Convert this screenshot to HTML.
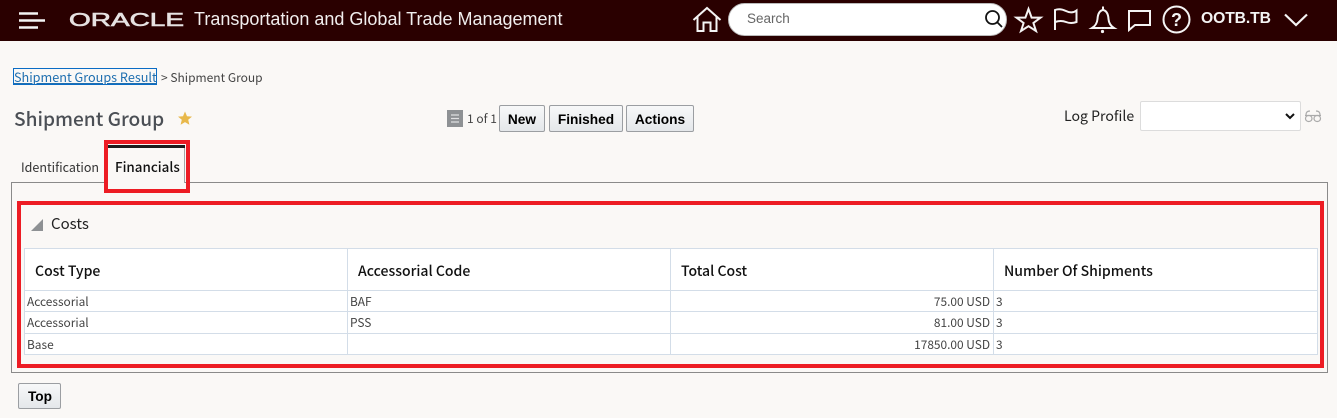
<!DOCTYPE html>
<html><head><meta charset="utf-8"><style>
html,body{margin:0;padding:0;width:1337px;height:418px;overflow:hidden;background:#faf8f6}
.a{position:absolute;white-space:nowrap}
.s{font-family:"Noto Sans CJK SC","Liberation Sans",sans-serif}
.l{font-family:"Liberation Sans",sans-serif}
.btn{position:absolute;box-sizing:border-box;border:1px solid #9b9ea2;border-radius:2px;background:linear-gradient(#f7f8f9,#e4e7ea);font:bold 13.7px/27px "Liberation Sans",sans-serif;color:#000;text-align:center}
.hl{position:absolute;background:#d3dde8}
.th{font-size:14.05px;font-weight:500;color:#111;line-height:20px}
.td{font-size:11.9px;color:#444;line-height:16px}
.red{position:absolute;box-sizing:border-box;border:4px solid #ed1c24}
</style></head><body>
<div class="a" style="left:0;top:0;width:1337px;height:41px;background:#2a0000"></div>
<svg class="a" style="left:0;top:0" width="1337" height="41" fill="none" stroke="#f4f4f4" stroke-width="2">
<path d="M19 13.5H38M19 20.5H45M19 27.5H38" stroke-width="2.4"/>
<text x="69" y="26" font-family="Liberation Sans" font-size="18" fill="#e6e2e2" stroke="#e6e2e2" stroke-width=".6" textLength="115" lengthAdjust="spacingAndGlyphs">ORACLE</text>
<path d="M693.5 20L707 8L720.5 20M697.5 17V31H703.5V22.5H710.5V31H716.5V17" stroke-width="2"/>
<path d="M1028.5 9L1031.6 17.6H1040.6L1033.4 23L1036 31L1028.5 26.2L1021 31L1023.6 23L1016.4 17.6H1025.4Z"/>
<path d="M1055 30V10Q1060 8 1066 11T1076.5 10.5V22Q1071 24 1066 22T1055 22"/>
<path d="M1092 28H1114Q1109 25 1108.5 19Q1108 11 1103 10Q1098 11 1097.5 19Q1097 25 1092 28ZM1103 10V6.5"/>
<circle cx="1102.5" cy="31.5" r="1.6" fill="#f4f4f4" stroke="none"/>
<path d="M1129 11H1150V25H1135L1129 30Z"/>
<circle cx="1176.5" cy="19.5" r="13"/>
<text x="1176.5" y="26" font-family="Liberation Sans" font-size="18" font-weight="bold" fill="#f4f4f4" stroke="none" text-anchor="middle">?</text>
<path d="M1285 14.5L1296 25L1307 14.5" stroke-width="2.2"/>
</svg>
<div class="a l" style="left:194px;top:8px;font-size:18px;line-height:22px;color:#f1eeee">Transportation and Global Trade Management</div>
<div class="a" style="left:728px;top:3px;width:279px;height:33px;box-sizing:border-box;background:#fff;border-radius:17px;border:1px solid #bbb"></div>
<div class="a l" style="left:747px;top:11px;font-size:13.5px;line-height:16px;color:#666">Search</div>
<svg class="a" style="left:984px;top:9px" width="20" height="20" fill="none" stroke="#111" stroke-width="1.8"><circle cx="8.5" cy="8.5" r="6.5"/><path d="M13 13L18 18"/></svg>
<div class="a l" style="left:1201px;top:10px;font-size:15.7px;font-weight:bold;line-height:18px;color:#f4f4f4;letter-spacing:-.1px">OOTB.TB</div>

<div class="a" style="left:13px;top:68px;width:144px;height:17px;box-sizing:border-box;border:1px solid #0a6cc4"></div>
<div class="a s" style="left:14px;top:68px;font-size:12.65px;line-height:18px;color:#1f6fb0;text-decoration:underline">Shipment Groups Result</div>
<div class="a s" style="left:161px;top:69px;font-size:12px;line-height:17px;color:#444">&gt; Shipment Group</div>
<div class="a s" style="left:14px;top:105px;font-size:19.1px;font-weight:500;line-height:26px;color:#4b4f55">Shipment Group</div>
<svg class="a" style="left:177px;top:110px" width="16" height="16"><path d="M8 1.5L10 6.2L15 6.6L11.2 9.8L12.4 14.7L8 12.1L3.6 14.7L4.8 9.8L1 6.6L6 6.2Z" fill="#e8b84a"/></svg>
<div class="a" style="left:447px;top:110px;width:16px;height:17px;background:#8e9194"></div>
<svg class="a" style="left:447px;top:110px" width="16" height="17" stroke="#dfe0e1" stroke-width="1.3"><path d="M4 5H12M4 8.5H12M4 12H12"/></svg>
<div class="a s" style="left:467px;top:110px;font-size:12px;line-height:17px;color:#444">1 of 1</div>
<div class="btn" style="left:499px;top:105px;width:46px;height:27px">New</div>
<div class="btn" style="left:549px;top:105px;width:74px;height:27px">Finished</div>
<div class="btn" style="left:626px;top:105px;width:68px;height:27px">Actions</div>
<div class="a s" style="left:1064px;top:106px;font-size:14.1px;line-height:20px;color:#222">Log Profile</div>
<div class="a" style="left:1140px;top:101px;width:161px;height:30px;box-sizing:border-box;background:#fff;border:1px solid #dcdcdc;border-radius:2px"></div>
<svg class="a" style="left:1284px;top:112px" width="12" height="9" fill="none" stroke="#111" stroke-width="2"><path d="M2 2L6 6L10 2"/></svg>
<svg class="a" style="left:1304px;top:109px" width="18" height="14" fill="none" stroke="#aaa" stroke-width="1.2"><path d="M1 6.5H17"/><rect x="1.5" y="6.5" width="6.5" height="6" rx="3"/><rect x="10" y="6.5" width="6.5" height="6" rx="3"/><path d="M2 6Q2 2 6 2M16 6Q16 2 12 2"/></svg>

<div class="a" style="left:11px;top:182px;width:1317px;height:191px;box-sizing:border-box;border:1px solid #8a8a8a"></div>
<div class="a" style="left:108px;top:148px;width:77px;height:35px;background:#faf8f6;border-right:1px solid #a5a5a5;box-sizing:border-box"></div>
<div class="a" style="left:108px;top:145px;width:77px;height:3px;background:#1c1c1c"></div>
<div class="a s" style="left:21px;top:157px;font-size:12.5px;line-height:20px;color:#333">Identification</div>
<div class="a s" style="left:115px;top:156px;font-size:13.4px;font-weight:500;line-height:20px;color:#111">Financials</div>
<div class="red" style="left:104px;top:140px;width:86px;height:53px"></div>
<div class="red" style="left:17px;top:201px;width:1307px;height:167px"></div>
<svg class="a" style="left:30px;top:218px" width="14" height="14"><path d="M1 13L13 1V13Z" fill="#8e9194"/></svg>
<div class="a s" style="left:51px;top:214px;font-size:15px;line-height:20px;color:#222">Costs</div>

<div class="a" style="left:24px;top:248px;width:1293px;height:107px;background:#fff"></div>
<div class="hl" style="left:24px;top:248px;width:1294px;height:1px"></div>
<div class="hl" style="left:24px;top:290px;width:1294px;height:1px"></div>
<div class="hl" style="left:24px;top:311px;width:1294px;height:1px"></div>
<div class="hl" style="left:24px;top:333px;width:1294px;height:1px"></div>
<div class="hl" style="left:24px;top:354px;width:1294px;height:1px"></div>
<div class="hl" style="left:24px;top:248px;width:1px;height:107px"></div>
<div class="hl" style="left:347px;top:248px;width:1px;height:107px"></div>
<div class="hl" style="left:670px;top:248px;width:1px;height:107px"></div>
<div class="hl" style="left:993px;top:248px;width:1px;height:107px"></div>
<div class="hl" style="left:1317px;top:248px;width:1px;height:107px"></div>
<div class="a s th" style="left:35px;top:261px">Cost Type</div>
<div class="a s th" style="left:358px;top:261px">Accessorial Code</div>
<div class="a s th" style="left:681px;top:261px">Total Cost</div>
<div class="a s th" style="left:1004px;top:261px">Number Of Shipments</div>
<div class="a s td" style="left:27px;top:294px">Accessorial</div>
<div class="a s td" style="left:350px;top:294px">BAF</div>
<div class="a s td" style="right:347px;top:294px">75.00 USD</div>
<div class="a s td" style="left:996px;top:294px">3</div>
<div class="a s td" style="left:27px;top:315px">Accessorial</div>
<div class="a s td" style="left:350px;top:315px">PSS</div>
<div class="a s td" style="right:347px;top:315px">81.00 USD</div>
<div class="a s td" style="left:996px;top:315px">3</div>
<div class="a s td" style="left:27px;top:337px">Base</div>
<div class="a s td" style="right:347px;top:337px">17850.00 USD</div>
<div class="a s td" style="left:996px;top:337px">3</div>
<div class="btn" style="left:18px;top:383px;width:43px;height:26px;line-height:26px;padding-left:1px">Top</div>
</body></html>
